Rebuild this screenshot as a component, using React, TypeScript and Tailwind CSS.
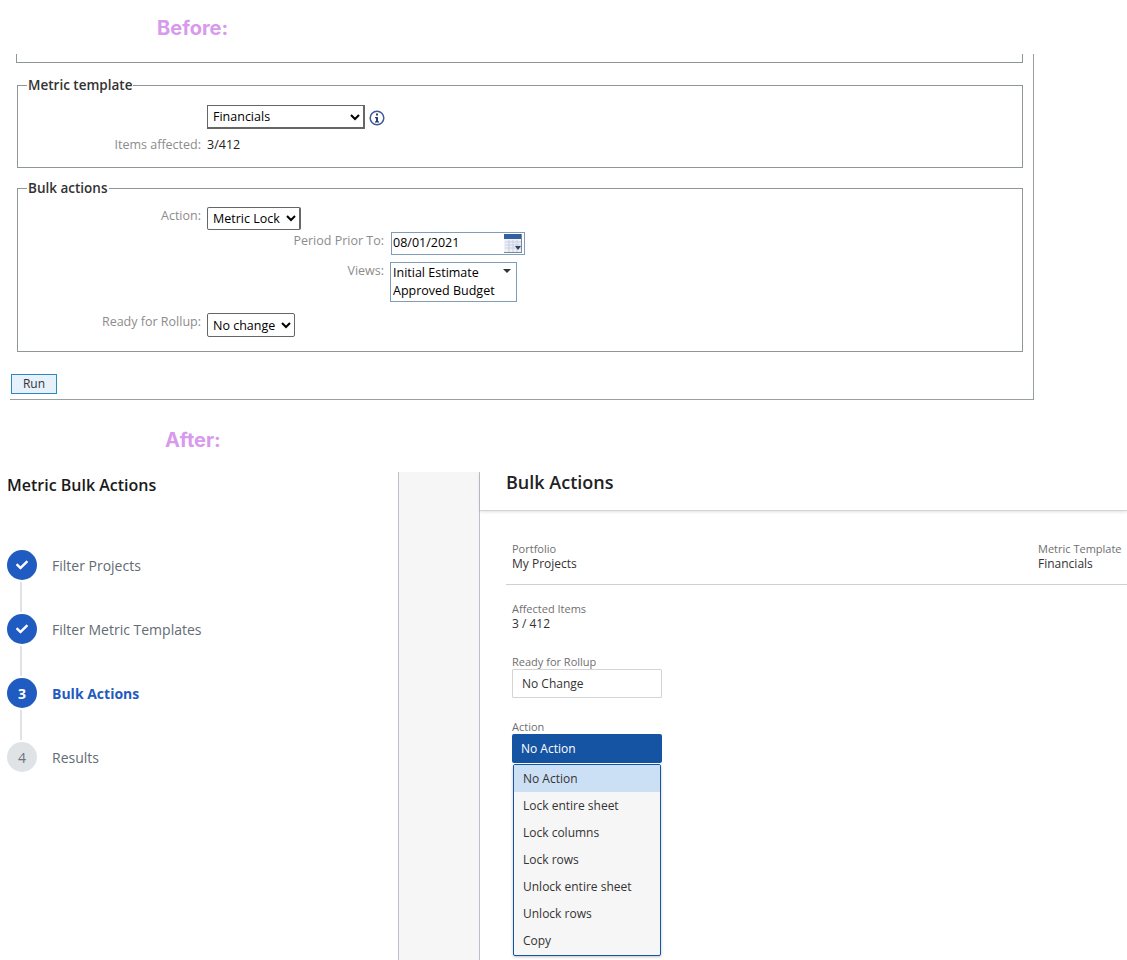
import { FaCheck } from 'react-icons/fa'

const ACTION_ITEMS = [
  'No Action',
  'Lock entire sheet',
  'Lock columns',
  'Lock rows',
  'Unlock entire sheet',
  'Unlock rows',
  'Copy',
] as const

const STEPS = [
  { label: 'Filter Projects', state: 'done', mark: '' },
  { label: 'Filter Metric Templates', state: 'done', mark: '' },
  { label: 'Bulk Actions', state: 'active', mark: '3' },
  { label: 'Results', state: 'todo', mark: '4' },
] as const

function InfoIcon() {
  return (
    <svg width="16" height="16" viewBox="0 0 16 16" className="ml-[4px] mt-[5px] shrink-0">
      <circle cx="8" cy="8" r="6.8" fill="#fff" stroke="#3f5a99" strokeWidth="1.5" />
      <rect x="7" y="3.5" width="2" height="2" fill="#2c3f73" />
      <path d="M6 7h3v4.2h1v1.2H6v-1.2h1V8.2H6z" fill="#2c3f73" />
    </svg>
  )
}

function CalendarIcon() {
  return (
    <svg width="18" height="19" viewBox="0 0 18 19" className="shrink-0">
      <rect x="0" y="0" width="18" height="19" fill="#eef2f8" />
      <rect x="0" y="0" width="18" height="5" fill="#34609f" />
      <path d="M1 8h16M1 11h16M1 14h16M5 6v12M9 6v12M13 6v12" stroke="#c7d0de" strokeWidth="1" />
      <path d="M11 12h6l-3 4z" fill="#27446f" />
      <path d="M17.5 0v19M0 18.5h18" stroke="#7c8798" strokeWidth="1" />
    </svg>
  )
}

function OldLabel({ children, className }: { children: string; className: string }) {
  return <span className={`text-right text-[12.5px] leading-[17px] text-[#8c8c8c] ${className}`}>{children}</span>
}

function BeforePanel() {
  return (
    <div className="ml-[10px] h-[346px] w-[1024px] border-r border-b border-[#9aa0a0] text-[12.5px] text-[#222]">
      <div className="ml-[6px] h-[9px] w-[1007px] border-x border-b border-[#8f9696]" />

      <fieldset className="ml-[7px] mt-[13px] h-[92px] w-[1006px] border border-[#8f9696] pl-[9px]">
        <legend className="px-[1px] text-[13.5px] font-semibold leading-[18px] text-[#333]">Metric template</legend>
        <div className="ml-[180px] mt-[11px] flex">
          <select className="h-[24px] w-[158px] border border-b-2 border-r-2 border-[#666] pl-[1px] text-[12.5px] text-black">
            <option>Financials</option>
          </select>
          <InfoIcon />
        </div>
        <div className="mt-[7px] flex gap-[6px]">
          <OldLabel className="w-[174px]">Items affected:</OldLabel>
          <span className="leading-[17px]">3/412</span>
        </div>
      </fieldset>

      <fieldset className="ml-[7px] mt-[11px] h-[173px] w-[1006px] border border-[#8f9696] pl-[9px]">
        <legend className="px-[1px] text-[13.5px] font-semibold leading-[18px] text-[#333]">Bulk actions</legend>
        <div className="mt-[10px] flex gap-[6px]">
          <OldLabel className="w-[174px]">Action:</OldLabel>
          <select className="h-[23px] w-[94px] rounded-[2px] border border-r-2 border-[#666] pl-[1px] text-[12.5px] text-black">
            <option>Metric Lock</option>
          </select>
        </div>
        <div className="mt-[2px] flex gap-[7px]">
          <OldLabel className="w-[357px]">Period Prior To:</OldLabel>
          <div className="flex h-[23px] w-[134px] items-center justify-between border border-[#7f9db9] pl-[1px] pr-[2px] text-black">
            08/01/2021
            <CalendarIcon />
          </div>
        </div>
        <div className="mt-[7px] flex gap-[6px]">
          <OldLabel className="w-[357px]">Views:</OldLabel>
          <div className="relative h-[40px] w-[127px] border border-[#7f9db9] px-[2px] pt-[1px] leading-[18px] text-black">
            <div>Initial Estimate</div>
            <div>Approved Budget</div>
            <span className="absolute right-[5px] top-[6px] h-0 w-0 border-x-[4px] border-t-[4px] border-x-transparent border-t-[#333]" />
          </div>
        </div>
        <div className="mt-[11px] flex gap-[6px]">
          <OldLabel className="w-[174px]">Ready for Rollup:</OldLabel>
          <select className="h-[24px] w-[88px] rounded-[2px] border border-[#666] pl-[1px] text-[12.5px] text-black">
            <option>No change</option>
          </select>
        </div>
      </fieldset>

      <button className="ml-[1px] mt-[22px] block h-[20px] w-[46px] border border-[#2b8ac6] bg-[#e6f1fb] text-[12px] leading-[18px] text-[#333]">
        Run
      </button>
    </div>
  )
}

function StepCircle({ state, mark }: { state: string; mark: string }) {
  if (state === 'todo') {
    return (
      <div className="flex h-[30px] w-[30px] shrink-0 items-center justify-center rounded-full bg-[#e0e3e6] text-[14px] text-[#6b7480]">
        {mark}
      </div>
    )
  }
  return (
    <div className="flex h-[30px] w-[30px] shrink-0 items-center justify-center rounded-full bg-[#1f5bc0] text-[14px] font-bold text-white">
      {state === 'done' ? <FaCheck className="h-[12px] w-[12px]" /> : mark}
    </div>
  )
}

function Stepper() {
  return (
    <div className="mt-[52px] ml-[7px]">
      {STEPS.map((step, i) => (
        <div key={step.label}>
          <div className="flex items-center gap-[15px]">
            <StepCircle state={step.state} mark={step.mark} />
            <span
              className={
                step.state === 'active'
                  ? 'text-[14px] font-bold text-[#1f5bc0]'
                  : 'text-[14px] text-[#636b75]'
              }
            >
              {step.label}
            </span>
          </div>
          {i < STEPS.length - 1 && <div className="ml-[13px] my-[2px] h-[30px] w-[2px] bg-[#e0e2e5]" />}
        </div>
      ))}
    </div>
  )
}

function Field({ label, value }: { label: string; value: string }) {
  return (
    <div>
      <div className="text-[11px] leading-[15px] text-[#6f6f6f]">{label}</div>
      <div className="text-[12px] leading-[16px] text-[#333]">{value}</div>
    </div>
  )
}

function AfterPanel() {
  return (
    <div className="flex h-[488px] overflow-hidden">
      <div className="w-[398px] shrink-0">
        <h2 className="pl-[7px] text-[16px] font-semibold leading-[26px] text-[#1a1a1a]">Metric Bulk Actions</h2>
        <Stepper />
      </div>
      <div className="w-[82px] shrink-0 border-x border-[#bcc1c9] bg-[#f6f6f6]" />
      <div className="min-w-0 flex-1">
        <div className="h-[39px] border-b border-[#d4d4d4] pl-[26px] shadow-[0_1px_3px_rgba(0,0,0,0.12)]">
          <h2 className="text-[18px] font-semibold leading-[21px] text-[#222]">Bulk Actions</h2>
        </div>
        <div className="ml-[26px] mt-[30px] flex h-[44px] justify-between border-b border-[#d0d0d0] pl-[6px]">
          <Field label="Portfolio" value="My Projects" />
          <div className="w-[89px] shrink-0">
            <Field label="Metric Template" value="Financials" />
          </div>
        </div>
        <div className="ml-[32px] mt-[16px]">
          <Field label="Affected Items" value="3 / 412" />
        </div>
        <div className="ml-[32px] mt-[22px] w-[150px]">
          <div className="text-[11px] leading-[15px] text-[#6f6f6f]">Ready for Rollup</div>
          <div className="flex h-[29px] items-center rounded-[1px] border border-[#d4d4d4] pl-[9px] text-[12px] text-[#333]">
            No Change
          </div>
          <div className="mt-[21px] text-[11px] leading-[15px] text-[#6f6f6f]">Action</div>
          <div className="flex h-[29px] items-center rounded-[2px] bg-[#1554a3] pl-[9px] text-[12px] text-white">
            No Action
          </div>
          <ul className="mx-[1px] mt-[1px] h-[192px] overflow-hidden rounded-[2px] border border-[#1554a3] bg-[#f6f6f6] shadow-[0_1px_3px_rgba(0,0,0,0.25)]">
            {ACTION_ITEMS.map((item, i) => (
              <li
                key={item}
                className={`flex h-[27px] items-center pl-[9px] text-[12px] text-[#333] ${i === 0 ? 'bg-[#cce0f5]' : ''}`}
              >
                {item}
              </li>
            ))}
          </ul>
        </div>
      </div>
    </div>
  )
}

export default function App() {
  return (
    <div className="h-[960px] w-[1127px] overflow-hidden bg-white font-['Open_Sans',sans-serif]">
      <div className="h-[54px] pl-[157px] pt-[14px] font-['Inter',sans-serif] text-[20px] font-bold leading-[28px] text-[#d79aec]">
        Before:
      </div>
      <BeforePanel />
      <div className="h-[72px] pl-[165px] pt-[26px] font-['Inter',sans-serif] text-[20px] font-bold leading-[28px] text-[#d79aec]">
        After:
      </div>
      <AfterPanel />
    </div>
  )
}
